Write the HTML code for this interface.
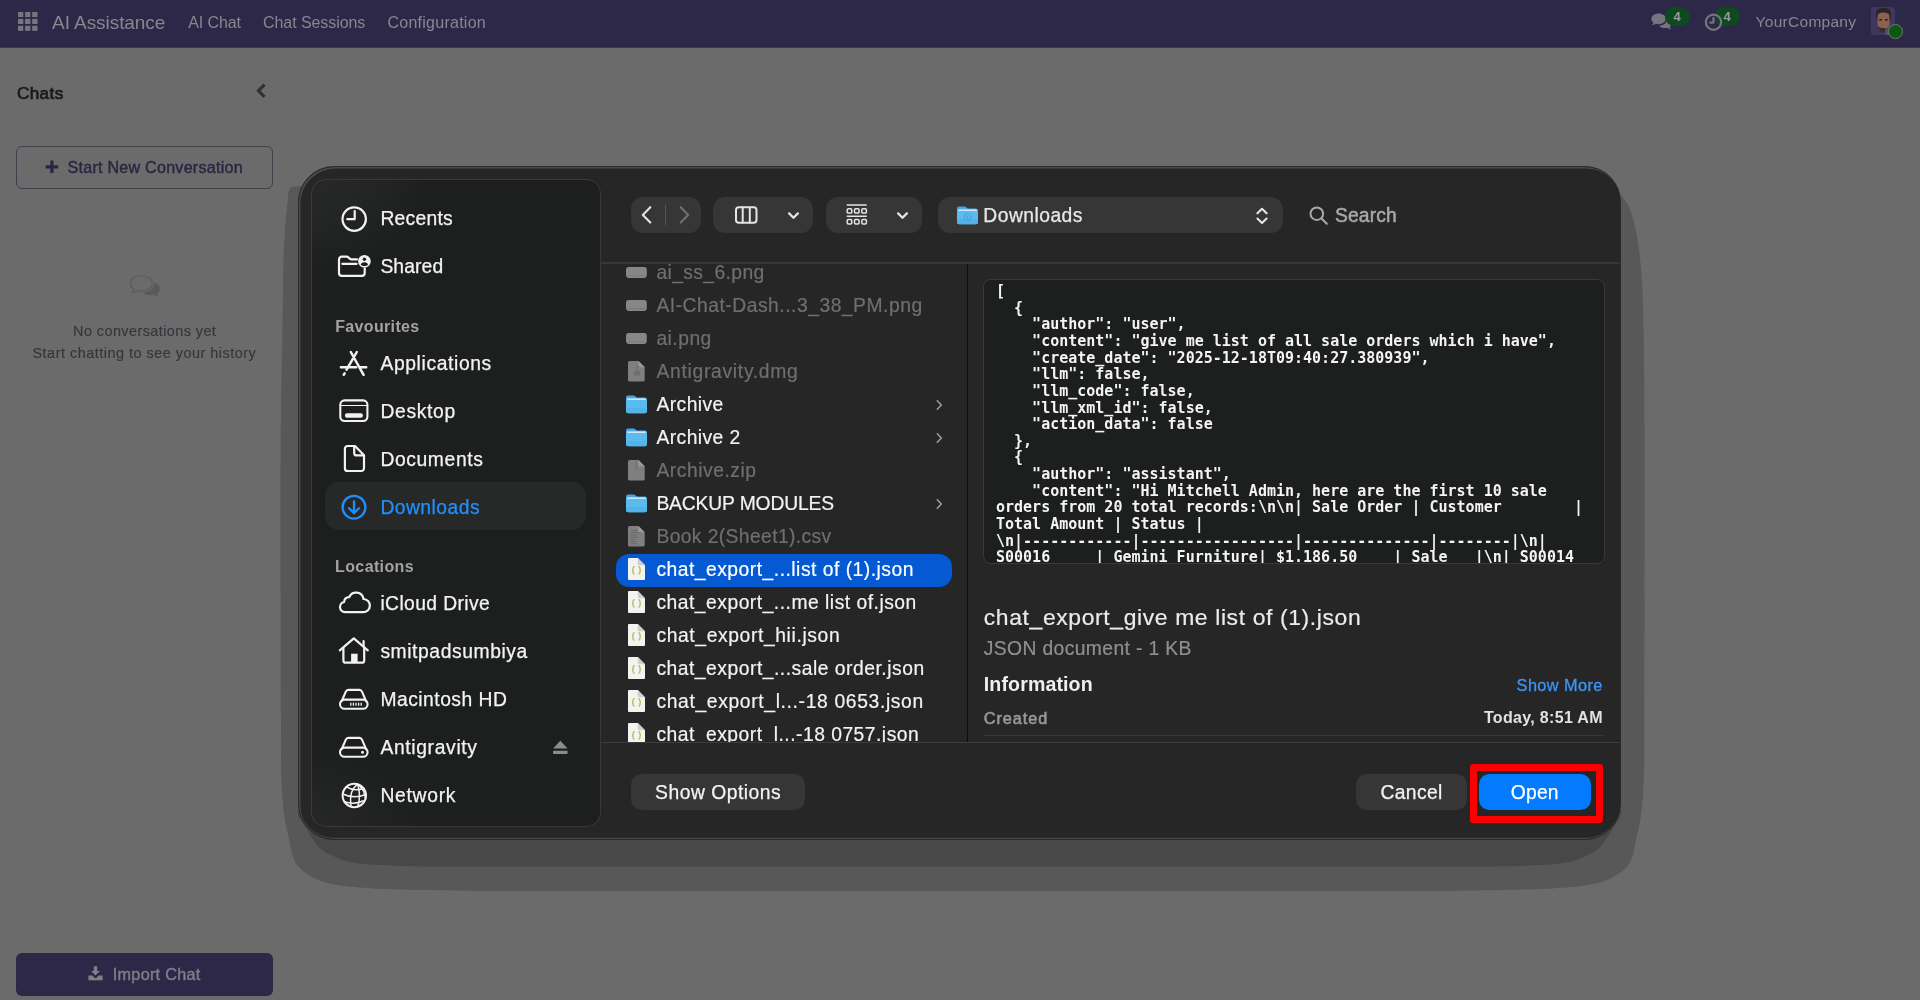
<!DOCTYPE html>
<html lang="en">
<head>
<meta charset="utf-8">
<title>AI Assistance</title>
<style>
*{box-sizing:border-box;margin:0;padding:0}
html,body{width:1920px;height:1000px;overflow:hidden}
body{background:#6b6b6b;font-family:"Liberation Sans",sans-serif;position:relative;color:#fff}
#root{position:absolute;left:0;top:0;width:1920px;height:1000px;will-change:transform}
.a{position:absolute}
.t{position:absolute;white-space:nowrap;line-height:1}
svg{position:absolute;overflow:visible}
#nav{left:0;top:0;width:1920px;height:48px;background:#2e2848;border-bottom:1.3px solid #3b3944}
#newconv{left:16px;top:145.5px;width:257px;height:43px;border:1px solid #403f4a;border-radius:6px}
#import{left:16px;top:953px;width:257px;height:43px;border-radius:6px;background:#2e2848}
#sh1{left:280.5px;top:190px;width:1364px;height:701px;background:#585858;border-radius:18px 24px 77px 90px / 170px 130px 50px 108px}
#sh2{left:304px;top:745px;width:1334px;height:121px;background:#484848;border-radius:4px 17px 70px 61px / 4px 80px 38px 61px}
#dlg{left:298px;top:165.5px;width:1323px;height:674.5px;background:#262626;border-radius:36px;border:1px solid #2a2a2a;box-shadow:inset 1.5px 1.5px 0 0 #484848,inset 0 -1.2px 0 0 #464646}
#side{left:311px;top:179px;width:290px;height:648px;background:#1d1e1e;border:1px solid #3a3a3a;border-right:1.6px solid #383838;border-radius:15px;background-image:radial-gradient(ellipse 120px 90px at 0 0,rgba(255,255,255,0.045) 0,rgba(255,255,255,0.03) 45%,transparent 100%),radial-gradient(ellipse 110px 80px at 0 100%,rgba(255,255,255,0.04) 0,rgba(255,255,255,0.025) 45%,transparent 100%)}
#dlsel{left:325px;top:482px;width:261px;height:48px;border-radius:14px;background:#272828}
.tb{position:absolute;top:197px;height:36px;border-radius:12px;background:#363636}
.hl{position:absolute;height:1px;background:#3c3c3c}
#vsep{left:967px;top:264px;width:1.4px;height:478px;background:#0e0e0e}
#selrow{left:616px;top:553.5px;width:336px;height:33px;border-radius:13px;background:#0559d2}
#prev{left:983px;top:279px;width:622px;height:284.5px;border:1.5px solid #3a3a3a;border-radius:8px;background:#1d1e1e;overflow:hidden}
#prev pre{position:absolute;left:12px;top:3.2px;font-family:"DejaVu Sans Mono","Liberation Mono",monospace;font-weight:bold;font-size:15px;line-height:16.63px;color:#f4f4f4;white-space:pre}
.btn{position:absolute;top:774px;height:36px;border-radius:10.5px;background:#363636}
#botbar{left:601px;top:742px;width:1018.5px;height:95px;background:#262626;border-radius:0 0 33px 0}

</style>
</head>
<body>
<div id="root">
<div id="nav" class="a"></div>
<span class="t" style="left:52.10px;top:13px;font-size:19px;color:#88868e;letter-spacing:-0.066px">AI Assistance</span>
<span class="t" style="left:188.30px;top:15px;font-size:16px;color:#88868e;letter-spacing:-0.127px">AI Chat</span>
<span class="t" style="left:263.00px;top:15px;font-size:16px;color:#88868e;letter-spacing:-0.067px">Chat Sessions</span>
<span class="t" style="left:387.50px;top:15px;font-size:16px;color:#88868e;letter-spacing:0.250px">Configuration</span>
<span class="t" style="left:1755.60px;top:14px;font-size:15.5px;color:#88868e;letter-spacing:0.275px">YourCompany</span>
<span class="t" style="left:16.90px;top:85px;font-size:17.2px;color:#1a1a1d;letter-spacing:0.377px;-webkit-text-stroke:0.7px #1a1a1d">Chats</span>
<div id="newconv" class="a"></div>
<span class="t" style="left:67.50px;top:159px;font-size:16.1px;color:#2a2642;letter-spacing:0.247px;-webkit-text-stroke:0.4px #2a2642">Start New Conversation</span>
<span class="t" style="left:73.10px;top:324px;font-size:14.4px;color:#35363d;letter-spacing:0.442px;-webkit-text-stroke:0.15px #35363d">No conversations yet</span>
<span class="t" style="left:32.50px;top:346px;font-size:14.4px;color:#35363d;letter-spacing:0.509px;-webkit-text-stroke:0.15px #35363d">Start chatting to see your history</span>
<div id="import" class="a"></div>
<span class="t" style="left:112.80px;top:966px;font-size:16.2px;color:#807f87;letter-spacing:0.286px;-webkit-text-stroke:0.4px #807f87">Import Chat</span>
<svg style="left:0;top:0" width="1920" height="1000" viewBox="0 0 1920 1000"><path d="M300.0 186.0C298.3 186.4 292.1 185.8 290.0 188.5C287.9 191.2 288.4 195.1 287.6 202.0C286.8 208.9 285.7 220.0 285.0 230.0C284.3 240.0 283.9 247.0 283.5 262.0C283.1 277.0 283.0 297.0 282.6 320.0C282.2 343.0 281.6 373.3 281.2 400.0C280.8 426.7 280.6 446.7 280.5 480.0C280.4 513.3 280.5 560.0 280.6 600.0C280.7 640.0 280.9 690.0 281.0 720.0C281.1 750.0 280.8 764.0 281.4 780.0C282.0 796.0 283.1 806.0 284.4 816.0C285.7 826.0 287.8 833.2 289.2 840.0C290.6 846.8 291.1 852.2 293.0 857.0C294.9 861.8 296.3 865.2 300.5 869.0C304.7 872.8 311.1 877.2 318.0 880.0C324.9 882.8 332.0 884.3 342.0 885.8C352.0 887.2 365.0 888.0 378.0 888.7C391.0 889.4 403.0 889.6 420.0 890.0C437.0 890.4 456.7 890.6 480.0 890.8C503.3 891.0 412.5 891.0 560.0 891.0C707.5 891.0 1217.7 891.0 1365.2 891.0C1512.7 891.0 1421.9 891.0 1445.2 890.8C1468.5 890.6 1488.2 890.4 1505.2 890.0C1522.2 889.6 1534.2 889.4 1547.2 888.7C1560.2 888.0 1573.2 887.2 1583.2 885.8C1593.2 884.3 1600.3 882.8 1607.2 880.0C1614.1 877.2 1620.5 872.8 1624.7 869.0C1628.9 865.2 1630.3 861.8 1632.2 857.0C1634.1 852.2 1634.6 846.8 1636.0 840.0C1637.4 833.2 1639.5 826.0 1640.8 816.0C1642.1 806.0 1643.2 796.0 1643.8 780.0C1644.4 764.0 1644.1 750.0 1644.2 720.0C1644.3 690.0 1644.5 648.3 1644.5 600.0C1644.5 551.7 1644.6 470.0 1644.5 430.0C1644.4 390.0 1644.2 380.8 1644.0 360.0C1643.8 339.2 1643.4 319.2 1643.0 305.0C1642.6 290.8 1642.2 284.8 1641.5 275.0C1640.8 265.2 1639.8 254.8 1638.5 246.0C1637.2 237.2 1635.8 228.8 1634.0 222.0C1632.2 215.2 1630.3 209.7 1628.0 205.0C1625.7 200.3 1621.3 195.8 1620.0 194.0Z" fill="#585858"/><path d="M330.0 800.0C324.8 801.7 302.8 805.3 298.8 810.0C294.8 814.7 302.8 822.0 306.0 828.0C309.2 834.0 314.0 841.6 318.0 846.0C322.0 850.4 324.0 851.8 330.0 854.6C336.0 857.4 342.3 860.9 354.0 862.8C365.7 864.7 380.7 865.3 400.0 865.9C419.3 866.5 443.3 866.3 470.0 866.4C496.7 866.5 411.8 866.4 560.0 866.4C708.2 866.4 1210.8 866.4 1359.0 866.4C1507.2 866.4 1422.3 866.5 1449.0 866.4C1475.7 866.3 1499.7 866.5 1519.0 865.9C1538.3 865.3 1553.3 864.7 1565.0 862.8C1576.7 860.9 1583.0 857.4 1589.0 854.6C1595.0 851.8 1597.0 850.4 1601.0 846.0C1605.0 841.6 1609.8 834.0 1613.0 828.0C1616.2 822.0 1624.2 814.7 1620.2 810.0C1616.2 805.3 1594.2 801.7 1589.0 800.0Z" fill="#484848"/></svg>
<div id="dlg" class="a"></div>
<div id="side" class="a"></div><div id="dlsel" class="a"></div>
<span class="t" style="left:380.40px;top:209px;font-size:19.3px;color:#f3f3f3;letter-spacing:0.262px;-webkit-text-stroke:0.25px #f3f3f3">Recents</span>
<span class="t" style="left:380.40px;top:257px;font-size:19.3px;color:#f3f3f3;letter-spacing:0.112px;-webkit-text-stroke:0.25px #f3f3f3">Shared</span>
<span class="t" style="left:380.40px;top:354px;font-size:19.3px;color:#f3f3f3;letter-spacing:0.625px;-webkit-text-stroke:0.25px #f3f3f3">Applications</span>
<span class="t" style="left:380.40px;top:402px;font-size:19.3px;color:#f3f3f3;letter-spacing:0.678px;-webkit-text-stroke:0.25px #f3f3f3">Desktop</span>
<span class="t" style="left:380.40px;top:450px;font-size:19.3px;color:#f3f3f3;letter-spacing:0.618px;-webkit-text-stroke:0.25px #f3f3f3">Documents</span>
<span class="t" style="left:380.40px;top:498px;font-size:19.3px;color:#2090ff;letter-spacing:0.470px;-webkit-text-stroke:0.25px #2090ff">Downloads</span>
<span class="t" style="left:380.40px;top:594px;font-size:19.3px;color:#f3f3f3;letter-spacing:0.401px;-webkit-text-stroke:0.25px #f3f3f3">iCloud Drive</span>
<span class="t" style="left:380.40px;top:642px;font-size:19.3px;color:#f3f3f3;letter-spacing:0.582px;-webkit-text-stroke:0.25px #f3f3f3">smitpadsumbiya</span>
<span class="t" style="left:380.40px;top:690px;font-size:19.3px;color:#f3f3f3;letter-spacing:0.491px;-webkit-text-stroke:0.25px #f3f3f3">Macintosh HD</span>
<span class="t" style="left:380.40px;top:738px;font-size:19.3px;color:#f3f3f3;letter-spacing:0.657px;-webkit-text-stroke:0.25px #f3f3f3">Antigravity</span>
<span class="t" style="left:380.40px;top:786px;font-size:19.3px;color:#f3f3f3;letter-spacing:0.729px;-webkit-text-stroke:0.25px #f3f3f3">Network</span>
<span class="t" style="left:335.20px;top:319px;font-size:16px;color:#a3a3a3;letter-spacing:0.347px;font-weight:bold">Favourites</span>
<span class="t" style="left:335.10px;top:559px;font-size:16px;color:#a3a3a3;letter-spacing:0.362px;font-weight:bold">Locations</span>
<div class="tb" style="left:631px;width:70px"></div>
<div class="tb" style="left:713.2px;width:100.3px"></div>
<div class="tb" style="left:826.2px;width:96.3px"></div>
<div class="tb" style="left:938px;width:345px"></div>
<span class="t" style="left:983.30px;top:206px;font-size:19.3px;color:#e8e8e8;letter-spacing:0.470px;-webkit-text-stroke:0.25px #e8e8e8">Downloads</span>
<span class="t" style="left:1335.00px;top:206px;font-size:19.3px;color:#a9a9a9;letter-spacing:0.124px;-webkit-text-stroke:0.5px #a9a9a9">Search</span>
<div class="hl" style="left:601px;top:262px;width:1019px;height:2px;background:#373737"></div>
<div id="vsep" class="a"></div>
<div id="selrow" class="a"></div>
<span class="t" style="left:656.40px;top:263px;font-size:19.3px;color:#6f6f6f;letter-spacing:0.388px;-webkit-text-stroke:0.2px #6f6f6f">ai_ss_6.png</span>
<span class="t" style="left:656.40px;top:296px;font-size:19.3px;color:#6f6f6f;letter-spacing:0.511px;-webkit-text-stroke:0.2px #6f6f6f">AI-Chat-Dash...3_38_PM.png</span>
<span class="t" style="left:656.40px;top:329px;font-size:19.3px;color:#6f6f6f;letter-spacing:0.481px;-webkit-text-stroke:0.2px #6f6f6f">ai.png</span>
<span class="t" style="left:656.40px;top:362px;font-size:19.3px;color:#6f6f6f;letter-spacing:0.712px;-webkit-text-stroke:0.2px #6f6f6f">Antigravity.dmg</span>
<span class="t" style="left:656.40px;top:395px;font-size:19.3px;color:#f3f3f3;letter-spacing:0.439px;-webkit-text-stroke:0.2px #f3f3f3">Archive</span>
<span class="t" style="left:656.40px;top:428px;font-size:19.3px;color:#f3f3f3;letter-spacing:0.440px;-webkit-text-stroke:0.2px #f3f3f3">Archive 2</span>
<span class="t" style="left:656.40px;top:461px;font-size:19.3px;color:#6f6f6f;letter-spacing:0.532px;-webkit-text-stroke:0.2px #6f6f6f">Archive.zip</span>
<span class="t" style="left:656.40px;top:494px;font-size:19.3px;color:#f3f3f3;letter-spacing:-0.144px;-webkit-text-stroke:0.2px #f3f3f3">BACKUP MODULES</span>
<span class="t" style="left:656.40px;top:527px;font-size:19.3px;color:#6f6f6f;letter-spacing:0.389px;-webkit-text-stroke:0.2px #6f6f6f">Book 2(Sheet1).csv</span>
<span class="t" style="left:656.40px;top:560px;font-size:19.3px;color:#ffffff;letter-spacing:0.493px;-webkit-text-stroke:0.2px #ffffff">chat_export_...list of (1).json</span>
<span class="t" style="left:656.40px;top:593px;font-size:19.3px;color:#f3f3f3;letter-spacing:0.500px;-webkit-text-stroke:0.2px #f3f3f3">chat_export_...me list of.json</span>
<span class="t" style="left:656.40px;top:626px;font-size:19.3px;color:#f3f3f3;letter-spacing:0.617px;-webkit-text-stroke:0.2px #f3f3f3">chat_export_hii.json</span>
<span class="t" style="left:656.40px;top:659px;font-size:19.3px;color:#f3f3f3;letter-spacing:0.510px;-webkit-text-stroke:0.2px #f3f3f3">chat_export_...sale order.json</span>
<span class="t" style="left:656.40px;top:692px;font-size:19.3px;color:#f3f3f3;letter-spacing:0.648px;-webkit-text-stroke:0.2px #f3f3f3">chat_export_l...-18 0653.json</span>
<span class="t" style="left:656.40px;top:725px;font-size:19.3px;color:#f3f3f3;letter-spacing:0.487px;-webkit-text-stroke:0.2px #f3f3f3">chat_export_l...-18 0757.json</span>
<div id="prev" class="a"><pre>[
  {
    "author": "user",
    "content": "give me list of all sale orders which i have",
    "create_date": "2025-12-18T09:40:27.380939",
    "llm": false,
    "llm_code": false,
    "llm_xml_id": false,
    "action_data": false
  },
  {
    "author": "assistant",
    "content": "Hi Mitchell Admin, here are the first 10 sale
orders from 20 total records:\n\n| Sale Order | Customer        |
Total Amount | Status |
\n|------------|-----------------|--------------|--------|\n|
S00016     | Gemini Furniture| $1.186.50    | Sale   |\n| S00014</pre></div>
<span class="t" style="left:983.80px;top:606px;font-size:22.9px;color:#ebebeb;letter-spacing:0.626px;-webkit-text-stroke:0.2px #ebebeb">chat_export_give me list of (1).json</span>
<span class="t" style="left:983.80px;top:639px;font-size:19.3px;color:#909090;letter-spacing:0.383px;-webkit-text-stroke:0.2px #909090">JSON document - 1 KB</span>
<span class="t" style="left:983.80px;top:675px;font-size:19.6px;color:#efefef;letter-spacing:0.110px;font-weight:bold">Information</span>
<span class="t" style="left:1516.60px;top:677px;font-size:16.3px;color:#3d95f7;letter-spacing:0.428px;-webkit-text-stroke:0.3px #3d95f7">Show More</span>
<span class="t" style="left:983.80px;top:710px;font-size:16.3px;color:#989898;letter-spacing:0.912px;-webkit-text-stroke:0.6px #989898">Created</span>
<span class="t" style="left:1483.90px;top:710px;font-size:16px;color:#e2e2e2;letter-spacing:0.323px;font-weight:bold">Today, 8:51 AM</span>
<div class="hl" style="left:984px;top:735px;width:619px;background:#3a3a3a"></div>
<svg style="left:626px;top:266.9px" width="21" height="11" viewBox="0 0 21 11" fill="none" ><rect x="0" y="0" width="20.800" height="10.900" rx="2.800" fill="#878787"/><rect x="1.500" y="8.300" width="17" height="1" fill="#7a7a7a"/></svg>
<svg style="left:626px;top:299.9px" width="21" height="11" viewBox="0 0 21 11" fill="none" ><rect x="0" y="0" width="20.800" height="10.900" rx="2.800" fill="#878787"/><rect x="1.500" y="8.300" width="17" height="1" fill="#7a7a7a"/></svg>
<svg style="left:626px;top:332.9px" width="21" height="11" viewBox="0 0 21 11" fill="none" ><rect x="0" y="0" width="20.800" height="10.900" rx="2.800" fill="#878787"/><rect x="1.500" y="8.300" width="17" height="1" fill="#7a7a7a"/></svg>
<svg style="left:628.2px;top:361px" width="17" height="21" viewBox="0 0 17 21" fill="none" ><path d="M1.700 0h8.800l6.200 6.200v12.700a1.700 1.700 0 0 1-1.700 1.700H1.700A1.700 1.700 0 0 1 0 18.900V1.700A1.700 1.700 0 0 1 1.700 0z" fill="#7f7f7f"/><path d="M10.500 0l6.200 6.200h-4.700a1.500 1.500 0 0 1-1.500-1.500z" fill="#9a9a9a"/><path d="M9 3.500v8M9 5.500h2.500" stroke="#6e6e6e" stroke-width="0.900" fill="none"/><path d="M5.500 13.500c0-2.500 1.500-4 3.500-4s3.500 1.500 3.500 4c-1 1-2 1.300-3.500 1.300s-2.500-0.300-3.500-1.300z" fill="#6e6e6e"/></svg>
<svg style="left:628.2px;top:460px" width="17" height="21" viewBox="0 0 17 21" fill="none" ><path d="M1.700 0h8.800l6.200 6.200v12.700a1.700 1.700 0 0 1-1.700 1.700H1.700A1.700 1.700 0 0 1 0 18.900V1.700A1.700 1.700 0 0 1 1.700 0z" fill="#7f7f7f"/><path d="M10.500 0l6.200 6.200h-4.700a1.500 1.500 0 0 1-1.500-1.500z" fill="#9a9a9a"/><path d="M8 1v9" stroke="#6a6a6a" stroke-width="1.600" stroke-dasharray="1.200 1.200" fill="none"/></svg>
<svg style="left:628.2px;top:525.5px" width="17" height="21" viewBox="0 0 17 21" fill="none" ><path d="M1.700 0h8.800l6.200 6.200v12.700a1.700 1.700 0 0 1-1.700 1.700H1.700A1.700 1.700 0 0 1 0 18.900V1.700A1.700 1.700 0 0 1 1.700 0z" fill="#7f7f7f"/><path d="M10.500 0l6.200 6.200h-4.700a1.500 1.500 0 0 1-1.500-1.500z" fill="#9a9a9a"/><rect x="2.500" y="4.0" width="7" height="1.100" fill="#6a6a6a"/><rect x="2.500" y="6.2" width="9" height="1.100" fill="#6a6a6a"/><rect x="2.500" y="8.4" width="6" height="1.100" fill="#6a6a6a"/><rect x="2.500" y="10.6" width="8" height="1.100" fill="#6a6a6a"/><rect x="2.500" y="12.8" width="5" height="1.100" fill="#6a6a6a"/><rect x="2.500" y="15.0" width="7" height="1.100" fill="#6a6a6a"/><rect x="2.500" y="17.2" width="6" height="1.100" fill="#6a6a6a"/></svg>
<svg style="left:626px;top:394.8px" width="21" height="19" viewBox="0 0 21 19" fill="none" ><path d="M0 2.600A2.200 2.200 0 0 1 2.200 0.400h5.300c0.800 0 1.300 0.200 1.800 0.800l0.800 0.900c0.300 0.300 0.700 0.500 1.200 0.500h7.500a2.200 2.200 0 0 1 2.200 2.200v3H0z" fill="#46a6e6"/><rect x="0" y="3.600" width="21" height="14.600" rx="2.200" fill="#5cbbee"/><rect x="1.300" y="3.500" width="18.400" height="1.300" fill="#e6f4fd"/><rect x="0" y="13" width="21" height="5.200" rx="2.200" fill="#52b3ea"/></svg>
<svg style="left:935px;top:398.5px" width="9" height="12" viewBox="0 0 9 12" fill="none" stroke="#9c9c9c" stroke-width="1.6" stroke-linecap="round" stroke-linejoin="round" ><path d="M2.300 1.800l4 4.200-4 4.200"/></svg>
<svg style="left:626px;top:427.8px" width="21" height="19" viewBox="0 0 21 19" fill="none" ><path d="M0 2.600A2.200 2.200 0 0 1 2.200 0.400h5.300c0.800 0 1.300 0.200 1.800 0.800l0.800 0.900c0.300 0.300 0.700 0.500 1.200 0.500h7.500a2.200 2.200 0 0 1 2.200 2.200v3H0z" fill="#46a6e6"/><rect x="0" y="3.600" width="21" height="14.600" rx="2.200" fill="#5cbbee"/><rect x="1.300" y="3.500" width="18.400" height="1.300" fill="#e6f4fd"/><rect x="0" y="13" width="21" height="5.200" rx="2.200" fill="#52b3ea"/></svg>
<svg style="left:935px;top:431.5px" width="9" height="12" viewBox="0 0 9 12" fill="none" stroke="#9c9c9c" stroke-width="1.6" stroke-linecap="round" stroke-linejoin="round" ><path d="M2.300 1.800l4 4.200-4 4.200"/></svg>
<svg style="left:626px;top:493.8px" width="21" height="19" viewBox="0 0 21 19" fill="none" ><path d="M0 2.600A2.200 2.200 0 0 1 2.200 0.400h5.300c0.800 0 1.300 0.200 1.800 0.800l0.800 0.900c0.300 0.300 0.700 0.500 1.200 0.500h7.500a2.200 2.200 0 0 1 2.200 2.200v3H0z" fill="#46a6e6"/><rect x="0" y="3.600" width="21" height="14.600" rx="2.200" fill="#5cbbee"/><rect x="1.300" y="3.500" width="18.400" height="1.300" fill="#e6f4fd"/><rect x="0" y="13" width="21" height="5.200" rx="2.200" fill="#52b3ea"/></svg>
<svg style="left:935px;top:497.5px" width="9" height="12" viewBox="0 0 9 12" fill="none" stroke="#9c9c9c" stroke-width="1.6" stroke-linecap="round" stroke-linejoin="round" ><path d="M2.300 1.800l4 4.200-4 4.200"/></svg>
<svg style="left:628.2px;top:557.7px" width="17" height="22" viewBox="0 0 17 22" fill="none" ><path d="M1 0h8.800L17 7.200V21a1 1 0 0 1-1 1H1a1 1 0 0 1-1-1V1A1 1 0 0 1 1 0z" fill="#f3f3f1"/><path d="M9.800 0L17 7.200h-5.700a1.500 1.500 0 0 1-1.500-1.500z" fill="#cfcfcf"/><path d="M6.700 8.600c-1.300 0-1.600 0.500-1.600 1.500v1c0 0.800-0.300 1.200-1 1.300 0.700 0.100 1 0.500 1 1.300v1c0 1 0.300 1.500 1.600 1.500M10.300 8.600c1.300 0 1.600 0.500 1.600 1.500v1c0 0.800 0.300 1.200 1 1.300-0.700 0.100-1 0.500-1 1.300v1c0 1-0.300 1.500-1.600 1.500" fill="none" stroke="#b9b94e" stroke-width="1.300"/></svg>
<svg style="left:628.2px;top:590.7px" width="17" height="22" viewBox="0 0 17 22" fill="none" ><path d="M1 0h8.800L17 7.200V21a1 1 0 0 1-1 1H1a1 1 0 0 1-1-1V1A1 1 0 0 1 1 0z" fill="#f3f3f1"/><path d="M9.800 0L17 7.200h-5.700a1.500 1.500 0 0 1-1.500-1.500z" fill="#cfcfcf"/><path d="M6.700 8.600c-1.300 0-1.600 0.500-1.600 1.500v1c0 0.800-0.300 1.200-1 1.300 0.700 0.100 1 0.500 1 1.300v1c0 1 0.300 1.500 1.600 1.500M10.300 8.600c1.300 0 1.600 0.500 1.600 1.500v1c0 0.800 0.300 1.200 1 1.300-0.700 0.100-1 0.500-1 1.300v1c0 1-0.300 1.500-1.600 1.500" fill="none" stroke="#b9b94e" stroke-width="1.300"/></svg>
<svg style="left:628.2px;top:623.7px" width="17" height="22" viewBox="0 0 17 22" fill="none" ><path d="M1 0h8.800L17 7.200V21a1 1 0 0 1-1 1H1a1 1 0 0 1-1-1V1A1 1 0 0 1 1 0z" fill="#f3f3f1"/><path d="M9.800 0L17 7.200h-5.700a1.500 1.500 0 0 1-1.500-1.500z" fill="#cfcfcf"/><path d="M6.700 8.600c-1.300 0-1.600 0.500-1.600 1.500v1c0 0.800-0.300 1.200-1 1.300 0.700 0.100 1 0.500 1 1.300v1c0 1 0.300 1.500 1.600 1.500M10.300 8.600c1.300 0 1.600 0.500 1.600 1.500v1c0 0.800 0.300 1.200 1 1.300-0.700 0.100-1 0.500-1 1.300v1c0 1-0.300 1.500-1.600 1.500" fill="none" stroke="#b9b94e" stroke-width="1.300"/></svg>
<svg style="left:628.2px;top:656.7px" width="17" height="22" viewBox="0 0 17 22" fill="none" ><path d="M1 0h8.800L17 7.200V21a1 1 0 0 1-1 1H1a1 1 0 0 1-1-1V1A1 1 0 0 1 1 0z" fill="#f3f3f1"/><path d="M9.800 0L17 7.200h-5.700a1.500 1.500 0 0 1-1.500-1.500z" fill="#cfcfcf"/><path d="M6.700 8.600c-1.300 0-1.600 0.500-1.600 1.500v1c0 0.800-0.300 1.200-1 1.300 0.700 0.100 1 0.500 1 1.300v1c0 1 0.300 1.500 1.600 1.500M10.300 8.600c1.300 0 1.600 0.500 1.600 1.500v1c0 0.800 0.300 1.200 1 1.300-0.700 0.100-1 0.500-1 1.300v1c0 1-0.300 1.500-1.600 1.500" fill="none" stroke="#b9b94e" stroke-width="1.300"/></svg>
<svg style="left:628.2px;top:689.7px" width="17" height="22" viewBox="0 0 17 22" fill="none" ><path d="M1 0h8.800L17 7.200V21a1 1 0 0 1-1 1H1a1 1 0 0 1-1-1V1A1 1 0 0 1 1 0z" fill="#f3f3f1"/><path d="M9.800 0L17 7.200h-5.700a1.500 1.500 0 0 1-1.500-1.500z" fill="#cfcfcf"/><path d="M6.700 8.600c-1.300 0-1.600 0.500-1.600 1.500v1c0 0.800-0.300 1.200-1 1.300 0.700 0.100 1 0.500 1 1.300v1c0 1 0.300 1.500 1.600 1.500M10.300 8.600c1.300 0 1.600 0.500 1.600 1.500v1c0 0.800 0.300 1.200 1 1.300-0.700 0.100-1 0.500-1 1.300v1c0 1-0.300 1.500-1.600 1.500" fill="none" stroke="#b9b94e" stroke-width="1.300"/></svg>
<svg style="left:628.2px;top:722.7px" width="17" height="22" viewBox="0 0 17 22" fill="none" ><path d="M1 0h8.800L17 7.200V21a1 1 0 0 1-1 1H1a1 1 0 0 1-1-1V1A1 1 0 0 1 1 0z" fill="#f3f3f1"/><path d="M9.800 0L17 7.200h-5.700a1.500 1.500 0 0 1-1.500-1.500z" fill="#cfcfcf"/><path d="M6.700 8.600c-1.300 0-1.600 0.500-1.600 1.500v1c0 0.800-0.300 1.200-1 1.300 0.700 0.100 1 0.500 1 1.300v1c0 1 0.300 1.500 1.600 1.500M10.300 8.600c1.300 0 1.600 0.500 1.600 1.500v1c0 0.800 0.300 1.200 1 1.300-0.700 0.100-1 0.500-1 1.300v1c0 1-0.300 1.500-1.600 1.500" fill="none" stroke="#b9b94e" stroke-width="1.300"/></svg>
<div id="botbar" class="a"></div>
<div class="hl" style="left:601px;top:741.5px;width:1019px"></div>
<div class="btn" style="left:631px;width:174px"></div>
<span class="t" style="left:655.10px;top:783px;font-size:19.3px;color:#f3f3f3;letter-spacing:0.505px;-webkit-text-stroke:0.25px #f3f3f3">Show Options</span>
<div class="btn" style="left:1356px;width:111px"></div>
<span class="t" style="left:1380.50px;top:783px;font-size:19.3px;color:#f3f3f3;letter-spacing:0.356px;-webkit-text-stroke:0.25px #f3f3f3">Cancel</span>
<div class="btn" style="left:1479px;width:111.5px;top:773.5px;background:#047aff"></div>
<span class="t" style="left:1510.70px;top:783px;font-size:19.3px;color:#ffffff;letter-spacing:0.237px;-webkit-text-stroke:0.25px #ffffff">Open</span>
<div class="a" style="left:1470.3px;top:764.4px;width:133px;height:58.6px;border:7px solid #fb0000;border-radius:3px"></div>
<svg style="left:18.2px;top:11.7px" width="20" height="20" viewBox="0 0 20 20" fill="#76747e" ><rect x="0.0" y="0.0" width="5.3" height="5.1"/><rect x="7.1" y="0.0" width="5.3" height="5.1"/><rect x="14.2" y="0.0" width="5.3" height="5.1"/><rect x="0.0" y="6.9" width="5.3" height="5.1"/><rect x="7.1" y="6.9" width="5.3" height="5.1"/><rect x="14.2" y="6.9" width="5.3" height="5.1"/><rect x="0.0" y="13.8" width="5.3" height="5.1"/><rect x="7.1" y="13.8" width="5.3" height="5.1"/><rect x="14.2" y="13.8" width="5.3" height="5.1"/></svg>
<svg style="left:1651px;top:13px" width="21" height="17" viewBox="0 0 21 17" fill="#76747e" ><path d="M7.6 0.5C3.6 0.5 0.4 2.9 0.4 5.9c0 1.5 0.8 2.8 2.1 3.8-0.3 1-0.9 1.8-1.7 2.5 1.5-0.1 2.9-0.6 4-1.4 0.9 0.3 1.8 0.4 2.8 0.4 4 0 7.2-2.4 7.2-5.4S11.6 0.5 7.6 0.5z"/><path d="M16 6.6c0 3.3-3.4 6-7.9 6.2 1.3 1.4 3.4 2.3 5.8 2.3 0.9 0 1.8-0.1 2.6-0.4 1 0.8 2.300 1.300 3.800 1.400-0.800-0.700-1.300-1.500-1.600-2.400 1.200-0.900 1.900-2.100 1.900-3.400 0-1.900-1.600-3.600-3.900-4.400 0 0.200 0 0.400 0 0.700z"/></svg>
<div class="a" style="left:1665px;top:6.5px;width:24.5px;height:19.3px;border-radius:10px;background:#0d4a1d"></div>
<span class="t" style="left:1673.40px;top:10px;font-size:13px;color:#9a9aa2;letter-spacing:0.585px;font-weight:bold">4</span>
<div class="a" style="left:1715px;top:6.5px;width:24.5px;height:19.3px;border-radius:10px;background:#0d4a1d"></div>
<span class="t" style="left:1723.40px;top:10px;font-size:13px;color:#9a9aa2;letter-spacing:0.585px;font-weight:bold">4</span>
<svg style="left:1704px;top:12.8px" width="19" height="19" viewBox="0 0 19 19" fill="none" stroke="#76747e" stroke-width="2.2" stroke-linecap="round" stroke-linejoin="round" ><circle cx="9.5" cy="9.2" r="7.6"/><path d="M9.5 4.8v4.8h-3.300"/></svg>
<svg style="left:1871px;top:7px" width="24" height="28" viewBox="0 0 24 28" fill="none" ><rect x="0" y="0" width="24" height="28" rx="3" fill="#3f3760"/><path d="M5 6c0-3 3-5 8-5s7 2 7 6v4l-1 2H6l-1-3z" fill="#2b2328"/><path d="M6.500 9c0-2 2-3.500 6-3.500s6 1.500 6 4v7c0 4-2.500 7.500-6 7.500s-6-4-6-8z" fill="#8a6150"/><path d="M7 19c1 4 3 6.500 5.500 6.500S17 23 18.500 19c-1 1.500-3 2-6 2s-4.500-0.500-5.500-2z" fill="#3a2a2a"/><rect x="8.300" y="12" width="2.600" height="1.500" fill="#2a1d1d"/><rect x="14" y="12" width="2.600" height="1.500" fill="#2a1d1d"/><path d="M14 16l3 4 3-2v10h-6z" fill="#6a6a78" opacity="0.500"/></svg>
<div class="a" style="left:1888.300px;top:23.800px;width:15px;height:15px;border-radius:50%;background:#09590f;border:1.200px solid #77757f"></div>
<svg style="left:255px;top:82px" width="13" height="18" viewBox="0 0 13 18" fill="none" stroke="#303036" stroke-width="3.1" stroke-linecap="butt" stroke-linejoin="miter" ><path d="M9.500 2.700L3.400 8.800l6.100 6.100"/></svg>
<svg style="left:45px;top:160px" width="14" height="14" viewBox="0 0 14 14" fill="none" stroke="#2a2642" stroke-width="3.2" stroke-linecap="butt" stroke-linejoin="round" ><path d="M6.900 0.400v12.700M0.600 6.800h12.600"/></svg>
<svg style="left:129px;top:274px" width="32" height="25" viewBox="0 0 32 25" fill="none" ><path d="M12.500 1.500C6.400 1.500 1.500 5 1.500 9.400c0 2.300 1.300 4.300 3.400 5.700-0.300 1.300-1 2.400-1.900 3.300 1.900-0.200 3.700-0.900 5.200-2 1.300 0.400 2.800 0.600 4.300 0.600 6.100 0 11-3.500 11-7.600S18.600 1.500 12.500 1.500z" fill="none" stroke="#5d5d60" stroke-width="1.200"/><path d="M25.200 8.500c0.100 0.400 0.100 0.700 0.100 1.100 0 4.800-5.200 8.600-11.800 8.900 1.800 1.600 4.500 2.600 7.500 2.600 1.300 0 2.500-0.200 3.600-0.500 1.400 1.100 3.200 1.800 5.200 2-0.900-0.900-1.600-2-1.900-3.200 1.800-1.200 2.900-2.900 2.900-4.800 0-2.700-2.200-5-5.600-6.100z" fill="#5a5a5d"/></svg>
<svg style="left:88px;top:966px" width="16" height="15" viewBox="0 0 16 15" fill="#807f87" ><path d="M5.800 0.300h3.400v4.700h2.700L7.500 9.600 3.100 5h2.700z"/><path d="M0.400 9.400h3.900l2 2.100c0.700 0.700 1.700 0.700 2.400 0l2-2.100h3.900v4.900H0.400z"/></svg>
<svg style="left:340px;top:205px" width="29" height="29" viewBox="0 0 29 29" fill="none" stroke="#f2f2f2" stroke-width="2.2" stroke-linecap="round" stroke-linejoin="round" ><circle cx="14.2" cy="14.1" r="11.7"/><path d="M14.700 6v8.200H7.300"/></svg>
<svg style="left:336px;top:253px" width="36" height="27" viewBox="0 0 36 27" fill="none" stroke="#f2f2f2" stroke-width="2.2" stroke-linecap="round" stroke-linejoin="round" ><path d="M28.700 15.300v4.700a2.800 2.800 0 0 1-2.800 2.800H5.800A2.800 2.800 0 0 1 3 20V6.400a2.800 2.800 0 0 1 2.800-2.800h4.700c0.900 0 1.500 0.300 2.100 0.900l1.100 1.100c0.500 0.500 1.100 0.700 1.900 0.700h5.400"/><path d="M6.300 10.800h14.300"/><circle cx="28.400" cy="8.200" r="6.300" fill="#f2f2f2" stroke="none"/><circle cx="28.400" cy="6.300" r="1.700" fill="#1d1e1e" stroke="none"/><path d="M24.700 11.500c0.700-1.500 2-2.200 3.700-2.200s3 0.700 3.700 2.200c-1 1-2.300 1.500-3.700 1.500s-2.700-0.500-3.700-1.500z" fill="#1d1e1e" stroke="none"/></svg>
<svg style="left:340px;top:350px" width="28" height="26" viewBox="0 0 28 26" fill="none" stroke="#f2f2f2" stroke-width="2.5" stroke-linecap="round" stroke-linejoin="round" ><path d="M16.800 2L6.600 19.700M4.600 23.300l-0.900 1.500M10.800 2l12.800 22.800M0.900 17.200h15.300M19.800 17.200h6.400"/></svg>
<svg style="left:339px;top:399px" width="30" height="24" viewBox="0 0 30 24" fill="none" stroke="#f2f2f2" stroke-width="2.1" stroke-linecap="round" stroke-linejoin="round" ><rect x="1.300" y="1.400" width="27.100" height="20.600" rx="4.200"/><path d="M1.500 6.500h26.800" stroke-width="1.100"/><rect x="6.900" y="15.200" width="16" height="2.400" rx="1.200" fill="#f2f2f2"/></svg>
<svg style="left:343px;top:445px" width="23" height="28" viewBox="0 0 23 28" fill="none" stroke="#f2f2f2" stroke-width="2.2" stroke-linecap="round" stroke-linejoin="round" ><path d="M12 1H4.700A2.800 2.800 0 0 0 1.900 3.800v19.400A2.800 2.800 0 0 0 4.700 26h13.500a2.800 2.800 0 0 0 2.800-2.800V10.300L12 1z"/><path d="M11.200 1.300v6.600a2.500 2.500 0 0 0 2.500 2.500h7"/></svg>
<svg style="left:340px;top:493px" width="28" height="28" viewBox="0 0 28 28" fill="none" stroke="#1f8fff" stroke-width="2.3" stroke-linecap="round" stroke-linejoin="round" ><circle cx="14" cy="14.200" r="11.400"/><path d="M14 8.300v11.400M9 15.200l5 4.900 5-4.900"/></svg>
<svg style="left:338px;top:590px" width="33" height="24" viewBox="0 0 33 24" fill="none" stroke="#f2f2f2" stroke-width="2.2" stroke-linecap="round" stroke-linejoin="round" ><path d="M7 22.200a5.200 5.200 0 0 1-0.800-10.300a4.600 4.600 0 0 1 5-4.800a7.500 7.500 0 0 1 14.300 1.900a6.500 6.500 0 0 1-0.500 13.200z"/></svg>
<svg style="left:338px;top:637px" width="32" height="28" viewBox="0 0 32 28" fill="none" stroke="#f2f2f2" stroke-width="2.2" stroke-linecap="round" stroke-linejoin="round" ><path d="M1.800 13.300L15.800 1.400l14 11.900"/><path d="M5.400 10.800v12.600a2.300 2.300 0 0 0 2.300 2.300h16.200a2.300 2.300 0 0 0 2.300-2.300V10.800"/><path d="M25.600 4v5.600"/><rect x="13.100" y="16.700" width="6.500" height="9" fill="#f2f2f2" stroke="none"/></svg>
<svg style="left:338px;top:688px" width="32" height="23" viewBox="0 0 32 23" fill="none" stroke="#f2f2f2" stroke-width="2.1" stroke-linecap="round" stroke-linejoin="round" ><path d="M3.600 13.300L7.800 3.700a2.900 2.900 0 0 1 2.600-1.800h11a2.900 2.900 0 0 1 2.600 1.800l4.200 9.600"/><rect x="2" y="11.600" width="27.600" height="9.200" rx="4.600"/><path d="M12.8 14.700v3" stroke-width="1.300" stroke-linecap="butt"/><path d="M15.4 14.700v3" stroke-width="1.300" stroke-linecap="butt"/><path d="M18.0 14.700v3" stroke-width="1.300" stroke-linecap="butt"/><path d="M20.6 14.700v3" stroke-width="1.300" stroke-linecap="butt"/><path d="M23.2 14.700v3" stroke-width="1.300" stroke-linecap="butt"/></svg>
<svg style="left:338px;top:736px" width="32" height="23" viewBox="0 0 32 23" fill="none" stroke="#f2f2f2" stroke-width="2.1" stroke-linecap="round" stroke-linejoin="round" ><path d="M3.600 13.300L7.800 3.700a2.900 2.900 0 0 1 2.600-1.800h11a2.900 2.900 0 0 1 2.600 1.800l4.200 9.600"/><rect x="2" y="11.600" width="27.600" height="9.200" rx="4.600"/><circle cx="24.500" cy="16.300" r="1.500" fill="#f2f2f2" stroke="none"/></svg>
<svg style="left:552px;top:740px" width="17" height="15" viewBox="0 0 17 15" fill="#8c8c8c" ><path d="M8.300 0.800L15.600 8.600H1z"/><rect x="1" y="10.800" width="14.600" height="3.100" rx="0.800"/></svg>
<svg style="left:340px;top:781px" width="29" height="29" viewBox="0 0 29 29" fill="none" stroke="#f2f2f2" stroke-width="1.5" stroke-linecap="round" stroke-linejoin="round" ><circle cx="14.300" cy="14.500" r="11.700" stroke-width="2"/><path d="M17.500 3.200C12 7.500 9.500 13 11 25.500M17.500 3.200c2 5 2.500 14 0.500 22.300M17.500 3.200c5 3.500 7.500 8.500 8 15"/><path d="M6.500 5.800c4.500 3 11 3.800 17.500 1.500M2.800 13c6.500 3.200 15.500 3.500 23 0.500M4 20.500c5.500 2.200 13 2.200 19.500-0.800"/></svg>
<svg style="left:640px;top:205px" width="13" height="20" viewBox="0 0 13 20" fill="none" stroke="#e4e4e4" stroke-width="2.1" stroke-linecap="round" stroke-linejoin="round" ><path d="M10.300 2.200L2.800 9.900l7.500 7.700"/></svg>
<div class="a" style="left:665.300px;top:205px;width:1px;height:20px;background:#565656"></div>
<svg style="left:678px;top:205px" width="13" height="20" viewBox="0 0 13 20" fill="none" stroke="#707070" stroke-width="2.1" stroke-linecap="round" stroke-linejoin="round" ><path d="M2.700 2.200l7.500 7.700-7.500 7.700"/></svg>
<svg style="left:734px;top:205px" width="25" height="20" viewBox="0 0 25 20" fill="none" stroke="#e4e4e4" stroke-width="2" stroke-linecap="round" stroke-linejoin="round" ><rect x="2" y="2.300" width="20.500" height="15.500" rx="2.800"/><path d="M8.700 2.500v15M15.800 2.500v15"/></svg>
<svg style="left:787.3px;top:211px" width="13" height="9" viewBox="0 0 13 9" fill="none" stroke="#e4e4e4" stroke-width="2.3" stroke-linecap="round" stroke-linejoin="round" ><path d="M2.100 2.400l4.400 4.300 4.400-4.300"/></svg>
<svg style="left:896px;top:211px" width="13" height="9" viewBox="0 0 13 9" fill="none" stroke="#e4e4e4" stroke-width="2.3" stroke-linecap="round" stroke-linejoin="round" ><path d="M2.100 2.400l4.400 4.300 4.400-4.300"/></svg>
<svg style="left:845.5px;top:204px" width="22" height="22" viewBox="0 0 22 22" fill="none" stroke="#e4e4e4" stroke-width="1.5" stroke-linecap="round" stroke-linejoin="round" ><path d="M0.700 1h20M0.700 12.300h20" stroke-width="1.500" stroke-linecap="butt"/><rect x="1.2" y="4.7" width="4.600" height="4.400" rx="1.200" stroke-width="1.500"/><rect x="8.5" y="4.7" width="4.600" height="4.400" rx="1.200" stroke-width="1.500"/><rect x="15.8" y="4.7" width="4.600" height="4.400" rx="1.200" stroke-width="1.500"/><rect x="1.2" y="15.6" width="4.600" height="4.400" rx="1.200" stroke-width="1.500"/><rect x="8.5" y="15.6" width="4.600" height="4.400" rx="1.200" stroke-width="1.500"/><rect x="15.8" y="15.6" width="4.600" height="4.400" rx="1.200" stroke-width="1.500"/></svg>
<svg style="left:957px;top:206px" width="21" height="19" viewBox="0 0 21 19" fill="none" ><path d="M0 2.600A2.200 2.200 0 0 1 2.200 0.400h5.300c0.800 0 1.300 0.200 1.800 0.800l0.800 0.900c0.300 0.300 0.700 0.500 1.200 0.500h7.500a2.200 2.200 0 0 1 2.200 2.200v3H0z" fill="#46a6e6"/><rect x="0" y="3.600" width="21" height="14.600" rx="2.200" fill="#5cbbee"/><rect x="1.300" y="3.500" width="18.400" height="1.300" fill="#e6f4fd"/><rect x="0" y="13" width="21" height="5.200" rx="2.200" fill="#52b3ea"/><circle cx="10.500" cy="11" r="3.600" fill="none" stroke="#459fdd" stroke-width="1"/><path d="M10.500 9.200v3.400M9.100 11.400l1.400 1.400 1.400-1.400" fill="none" stroke="#459fdd" stroke-width="0.900"/></svg>
<svg style="left:1255px;top:207px" width="14" height="18" viewBox="0 0 14 18" fill="none" stroke="#e4e4e4" stroke-width="2.1" stroke-linecap="round" stroke-linejoin="round" ><path d="M2.400 6.300l4.600-4.500 4.600 4.500M2.400 11.600l4.600 4.500 4.600-4.500"/></svg>
<svg style="left:1309px;top:206px" width="19" height="19" viewBox="0 0 19 19" fill="none" stroke="#a9a9a9" stroke-width="2" stroke-linecap="round" stroke-linejoin="round" ><circle cx="7.800" cy="7.700" r="6.300"/><path d="M12.500 12.500l5.300 5.300"/></svg>
</div>
</body>
</html>
